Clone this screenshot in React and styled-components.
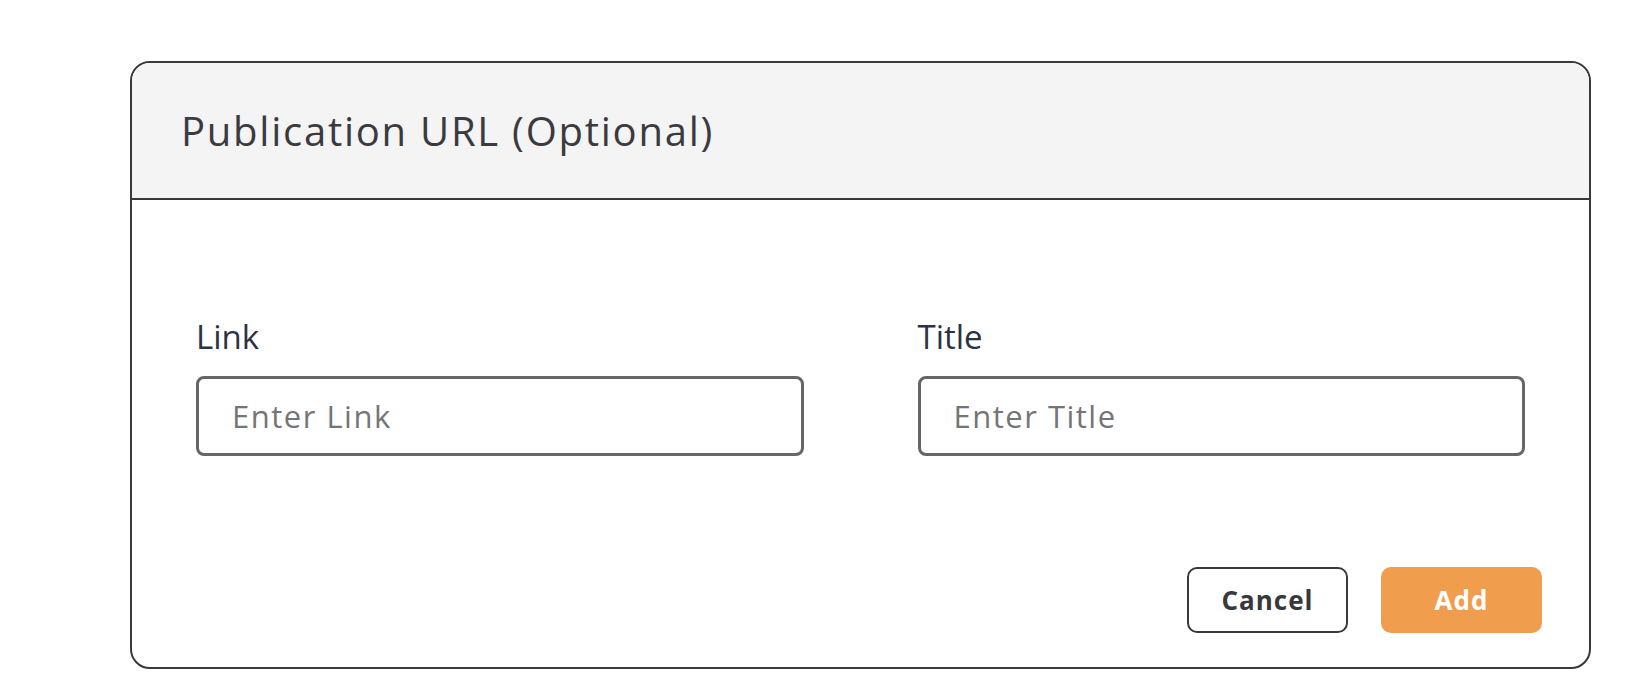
import React from 'react'
import styled, { createGlobalStyle } from 'styled-components'

const GlobalStyle = createGlobalStyle`
  body {
    margin: 0;
    background: #ffffff;
    font-family: "Open Sans", "Liberation Sans", sans-serif;
  }
`

const Page = styled.div`
  padding: 61px 37px 15px 130px;
`

const Card = styled.div`
  background: #ffffff;
  border: 2px solid #38383d;
  border-radius: 20px;
`

const Header = styled.div`
  display: flex;
  align-items: center;
  height: 135px;
  padding-left: 49px;
  background: #f4f4f4;
  border-bottom: 2px solid #38383d;
  border-radius: 18px 18px 0 0;
`

const Heading = styled.h2`
  margin: 0;
  font-size: 40px;
  font-weight: 400;
  letter-spacing: 1.75px;
  color: #3a3a40;
`

const Body = styled.div`
  padding: 117px 47px 34px 64px;
`

const FieldRow = styled.div`
  display: grid;
  grid-template-columns: 1fr 1fr;
  column-gap: 114px;
  margin-right: 17px;
`

const Field = styled.label`
  display: flex;
  flex-direction: column;
  gap: 19px;
`

const Label = styled.span`
  font-size: 33px;
  line-height: 40px;
  font-weight: 500;
  color: #2c3245;
`

const Input = styled.input`
  box-sizing: border-box;
  height: 80px;
  width: 100%;
  padding: 0 20px 0 33px;
  border: 3px solid #666666;
  border-radius: 8px;
  font-family: inherit;
  font-size: 31px;
  letter-spacing: 1.5px;
  color: #333;
  outline: none;

  ::placeholder {
    color: #7a7a7a;
  }
`

const Actions = styled.div`
  display: flex;
  justify-content: flex-end;
  gap: 33px;
  margin-top: 111px;
`

const ActionButton = styled.button`
  box-sizing: border-box;
  width: 161px;
  height: 66px;
  border-radius: 10px;
  border: 2px solid ${p => (p.$primary ? '#f09e4d' : '#38383d')};
  background: ${p => (p.$primary ? '#f09e4d' : '#ffffff')};
  color: ${p => (p.$primary ? '#ffffff' : '#38383d')};
  font-family: inherit;
  font-size: 26px;
  font-weight: 700;
  letter-spacing: 1px;
  cursor: pointer;
`

export default function App() {
  return (
    <Page>
      <GlobalStyle />
      <Card>
        <Header>
          <Heading>Publication URL (Optional)</Heading>
        </Header>
        <Body>
          <FieldRow>
            <Field>
              <Label>Link</Label>
              <Input placeholder="Enter Link" />
            </Field>
            <Field>
              <Label>Title</Label>
              <Input placeholder="Enter Title" />
            </Field>
          </FieldRow>
          <Actions>
            <ActionButton>Cancel</ActionButton>
            <ActionButton $primary>Add</ActionButton>
          </Actions>
        </Body>
      </Card>
    </Page>
  )
}
